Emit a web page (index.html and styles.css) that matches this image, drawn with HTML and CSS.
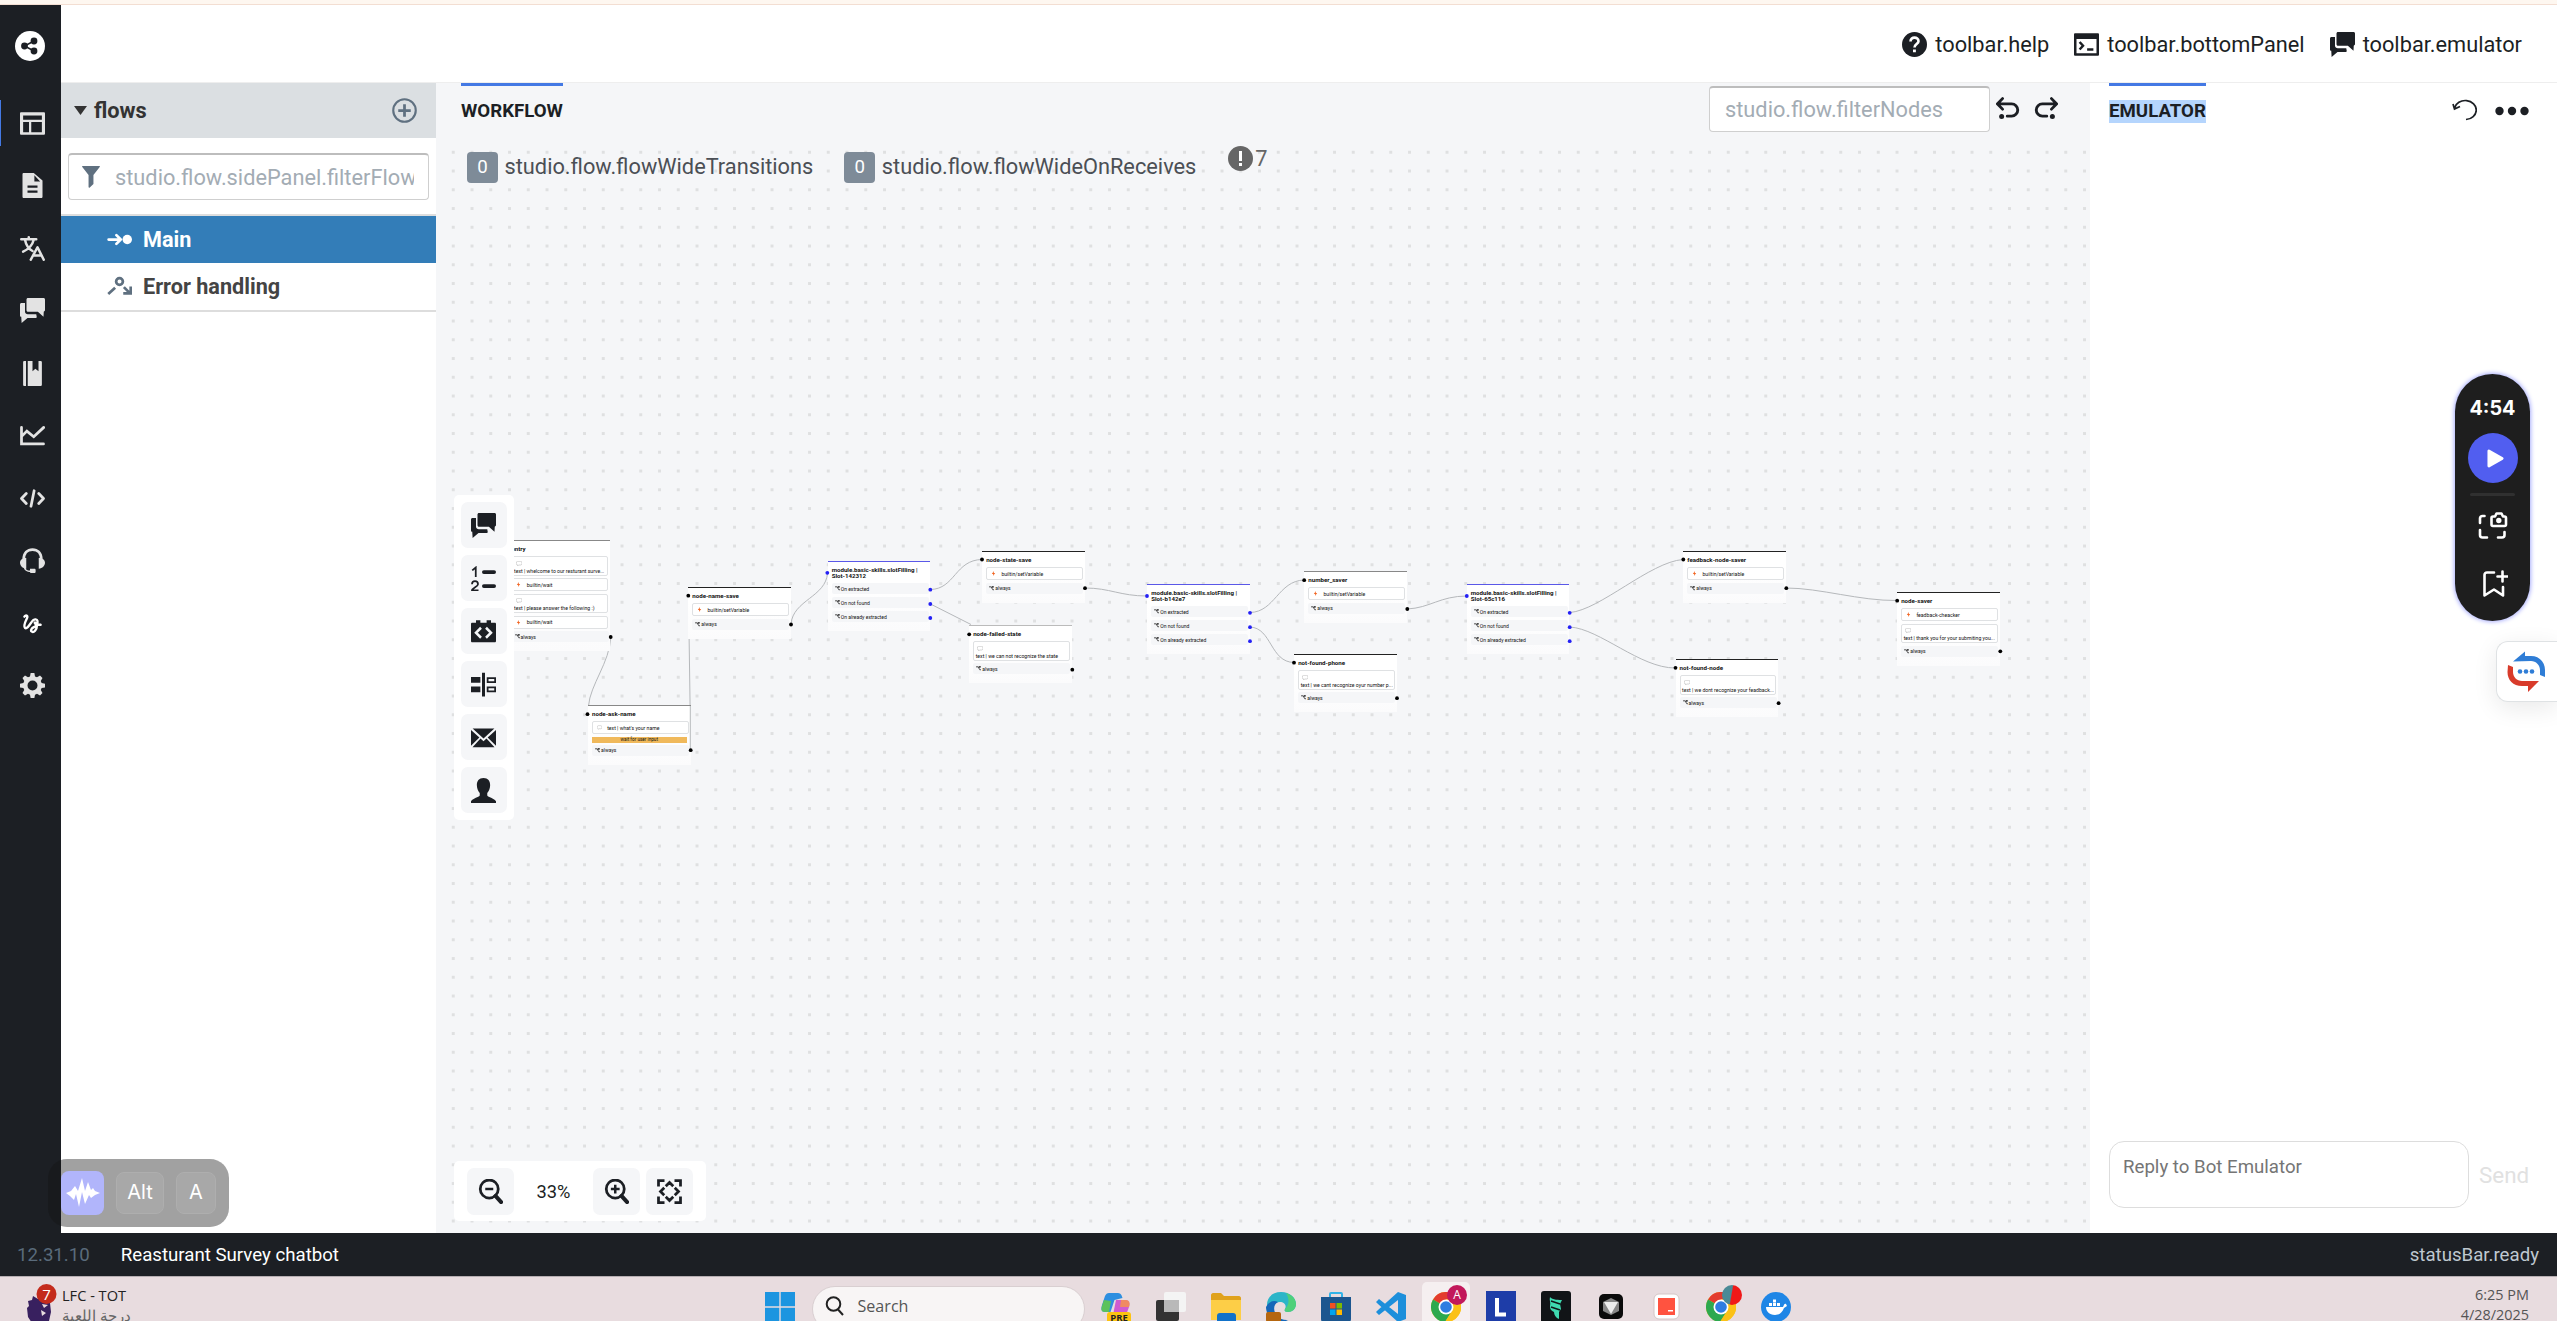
FILE: index.html
```html
<!DOCTYPE html>
<html lang="en">
<head>
<meta charset="utf-8">
<title>Studio</title>
<link rel="stylesheet" href="styles.css">
</head>
<body>
<svg class="defs" width="0" height="0">
  <symbol id="chat" viewBox="0 0 20 20"><path d="M4 4H1.200C.5 4 0 4.500 0 5.200V14c0 .7.3 1 1 1l.3 5L6 16h6.300c.6 0 1.100-.3 1.100-.9L13 13H6.200C5 13 4 12.200 4 11z"/><path d="M6.400 0H18.800C19.500 0 20 .5 20 1.200V10l-1 1-.2 4-4.500-4H6.400C5.700 11 5.200 10.500 5.200 9.800V1.200C5.200.5 5.700 0 6.400 0z"/></symbol>
  <symbol id="bolt" viewBox="0 0 8 12"><path d="M5 0L0 7h3.300L2.800 12 8 5H4.600z"/></symbol>
  <symbol id="branch" viewBox="0 0 12 12"><path d="M0 2h5l4 7h3M6 2h6M9 0v5" fill="none" stroke="currentColor" stroke-width="1.700"/></symbol>
  <symbol id="bubble" viewBox="0 0 12 10"><path d="M3 .6h6A2.800 3.300 0 0 1 9 8H5L3.500 9.500V8A2.800 3.700 0 0 1 3 .6z" fill="#fff" stroke="#aaa" stroke-width="1"/></symbol>
  <symbol id="chrome" viewBox="0 0 30 30"><circle cx="15" cy="15" r="15" fill="#fbc116"/><path d="M15 15L2 7.500A15 15 0 0 1 28 7.500H15z" fill="#e33b2e"/><path d="M2 7.500A15 15 0 0 0 14 30l7-11-6-4z" fill="#2da94f"/><path d="M15 7.500H28A15 15 0 0 1 14 30l7-11z" fill="#fbc116"/><circle cx="15" cy="15" r="7.500" fill="#fff"/><circle cx="15" cy="15" r="5.800" fill="#2f7de1"/></symbol>
</svg>
<div class="strip"></div>
<div class="app">
  <nav class="rail">
    <svg class="logo" viewBox="0 0 30 30"><circle cx="15" cy="15" r="15" fill="#fff"/><path d="M19 10L9.500 15l9.500 5" fill="none" stroke="#1c1f24" stroke-width="1.500"/><circle cx="19" cy="10" r="3.400" fill="#1c1f24"/><circle cx="9.500" cy="15" r="3.400" fill="#1c1f24"/><circle cx="19" cy="20" r="3.400" fill="#1c1f24"/></svg>
    <div class="rail-item active"><svg viewBox="0 0 20 20"><path fill-rule="evenodd" d="M1 1h18c.6 0 1 .4 1 1v16c0 .6-.4 1-1 1H1c-.6 0-1-.4-1-1V2c0-.6.400-1 1-1zm1.500 2.500V7h15V3.500zm0 5.200V17h4.700V8.700zm6.500 0V17h8.500V8.700z"/></svg></div>
    <div class="rail-item"><svg viewBox="0 0 20 20"><path fill-rule="evenodd" d="M3 0h8l7 6v13c0 .6-.4 1-1 1H3c-.6 0-1-.4-1-1V1c0-.6.400-1 1-1zm8.500 1.700v5h4.600zM6 10v1.800h8V10zm0 4v1.800h8V14z"/></svg></div>
    <div class="rail-item"><svg viewBox="0 0 20 20" fill="none" stroke="currentColor" stroke-width="2" stroke-linecap="round" stroke-linejoin="round"><path d="M1 2.600h12M7 1v1.600M4 3c1 5 4 8 6 9M11 3c-1 4-4 7.500-8.500 9.500M8.600 19L14 9l5 10M10.800 15.500h6.500"/></svg></div>
    <div class="rail-item"><svg><use href="#chat"/></svg></div>
    <div class="rail-item"><svg viewBox="0 0 20 20"><path d="M3.300 0H4.800V20H3.300A.8.800 0 0 1 2.500 19.200V.800A.8.800 0 0 1 3.300 0zM6.200 0H10V8.200L12.300 6.200 14.800 8.200V0h1.700A1 1 0 0 1 17.500 1V19a1 1 0 0 1-1 1H6.200z"/></svg></div>
    <div class="rail-item"><svg viewBox="0 0 20 20" fill="none" stroke="currentColor" stroke-width="2.200" stroke-linecap="round"><path d="M1.200 3.500v13.200h17.600M1.500 10.500L5.500 6.500l5.500 4.500 8-7.500"/></svg></div>
    <div class="rail-item"><svg viewBox="0 0 20 20" fill="none" stroke="currentColor" stroke-width="2.200" stroke-linecap="round" stroke-linejoin="round"><path d="M5 6L1.200 10 5 14M15 6l3.800 4L15 14M11.300 3.800L8.800 16.200"/></svg></div>
    <div class="rail-item"><svg viewBox="0 0 20 20"><path d="M3 9C3 4 6 1.200 10 1.200S17 4 17 9" fill="none" stroke="currentColor" stroke-width="2.200"/><path d="M5 8v8.500C2 16.500 0 14 0 11.800S2 7.500 5 8zM15 8v8.500c3 0 5-2.500 5-4.700S18 7.500 15 8zM8 16.500h3.500c.6 0 1 .4 1 1v1.500c0 .6-.4 1-1 1H9c-.6 0-1-.3-1-.8C6 19 4 18.500 3 16l1-.3c.8 1.700 2 2.200 4 2.300z"/></svg></div>
    <div class="rail-item bright"><svg viewBox="0 0 20 20" fill="none" stroke="currentColor" stroke-width="1.900" stroke-linecap="round" stroke-linejoin="round"><path d="M3.500 4.500C5 2.500 6.500 4 5.500 6S2.500 12 4 13.500s4-3 5.500-5 4-2.500 4.500-.5-1.500 4.500-3 5-3 2.500-1.500 3.500 4-1.500 4-4.500S11 8.500 12 10s3 .8 4.500 1"/></svg></div>
    <div class="rail-item"><svg viewBox="0 0 20 20"><path fill-rule="evenodd" d="M8.500 0h3l.5 2.700 1.600.7L16 2 18 4l-1.400 2.400.7 1.600 2.700.5v3l-2.700.5-.7 1.600L18 16l-2 2-2.400-1.400-1.600.7-.5 2.700h-3L8 17.300l-1.600-.7L4 18l-2-2 1.400-2.400L2.700 12 0 11.500v-3L2.700 8l.7-1.600L2 4l2-2 2.400 1.400L8 2.700zM10 6a4 4 0 1 0 0 8 4 4 0 0 0 0-8z"/></svg></div>
  </nav>
  <div class="main">
    <header class="topbar">
      <div class="tb"><svg viewBox="0 0 20 20"><circle cx="10" cy="10" r="10"/><path d="M6.800 7.500C6.800 3.500 13.200 3.500 13.200 7.300c0 2.200-3.200 2.400-3.200 5" fill="none" stroke="#fff" stroke-width="2.100"/><path d="M8.800 14h2.300v2.200H8.800z" fill="#fff"/></svg><span>toolbar.help</span></div>
      <div class="tb"><svg viewBox="0 0 20 20"><path fill-rule="evenodd" d="M1 1h18c.6 0 1 .4 1 1v16c0 .6-.4 1-1 1H1c-.6 0-1-.4-1-1V2c0-.6.400-1 1-1zm1 4.500V17h16V5.500z"/><path d="M4.500 8l2.700 3-2.700 3" fill="none" stroke="#1c1f24" stroke-width="2"/><path d="M10.500 13h5v2h-5z"/></svg><span>toolbar.bottomPanel</span></div>
      <div class="tb"><svg><use href="#chat"/></svg><span>toolbar.emulator</span></div>
    </header>
    <div class="panes">
      <aside class="side">
        <div class="side-head"><i class="caret"></i><b>flows</b><svg viewBox="0 0 20 20" fill="none" stroke="#5f7080" stroke-width="1.700"><circle cx="10" cy="10" r="9"/><path d="M10 5v10M5 10h10" stroke-width="2.200"/></svg></div>
        <div class="side-filter"><svg viewBox="0 0 22 27"><path d="M.8 0h20.400c.7 0 1 .8.500 1.300L14 11v11l-4.500 4.500c-.6.500-1.500.2-1.500-.7V11L.3 1.300C-.2.800.1 0 .8 0z" fill="#5f7080"/></svg><div class="ph">studio.flow.sidePanel.filterFlows</div></div>
        <div class="flow sel"><svg viewBox="0 0 20 20"><path d="M1.300 10h9M7.500 6.500L11 10l-3.500 3.500" fill="none" stroke="#fff" stroke-width="2.200" stroke-linecap="round" stroke-linejoin="round"/><circle cx="16.200" cy="10" r="3.800" fill="#fff"/></svg><b>Main</b></div>
        <div class="flow"><svg viewBox="0 0 20 20" fill="none" stroke="#5f7080" stroke-width="2.200"><path d="M1 16L6.500 11M13.500 10.500l5 5M19 10v5.500h-6"/><circle cx="10" cy="6" r="2.700"/></svg><b>Error handling</b></div>
      </aside>
      <section class="canvas">
        <div class="tabbar">
          <div class="tab"><b>WORKFLOW</b></div>
          <div class="tools">
            <div class="filter">studio.flow.filterNodes</div>
            <svg viewBox="0 0 20 20"><path d="M3 5.500h9.500a4.800 4.800 0 0 1 0 9.800H9M5.200 1.300L1.200 5.500l4 4.200" fill="none" stroke="#1c1f24" stroke-width="2.300" stroke-linecap="round"/><circle cx="4.500" cy="15.500" r="2"/></svg>
            <svg viewBox="0 0 20 20"><path d="M17 5.500H7.500a4.800 4.800 0 0 0 0 9.800H11M14.800 1.300l4 4.200-4 4.200" fill="none" stroke="#1c1f24" stroke-width="2.300" stroke-linecap="round"/><circle cx="15.500" cy="15.500" r="2"/></svg>
          </div>
        </div>
        <div class="wide"><span class="badge">0</span><span class="w1">studio.flow.flowWideTransitions</span><span class="badge">0</span><span class="w2">studio.flow.flowWideOnReceives</span><span class="warn"><svg viewBox="0 0 20 20"><circle cx="10" cy="10" r="10"/><path d="M8.800 4h2.400v8H8.800zM8.800 13.500h2.400v2.400H8.800z" fill="#fff"/></svg>7</span></div>

        <div class="diagram">
          <svg class="edges" width="2557" height="1321" fill="none" stroke="#b5b8bb" stroke-width="1">
            <path d="M610.700 637C610 662 590 685 588.500 706"/><path d="M690.500 750L690 700 688.500 596"/><path d="M791 624C793 600 826 597 827.500 573"/><path d="M930.500 589.500C955 589 955 560 982 559.500"/><path d="M930.500 604L971 624.500"/><path d="M1085 588C1110 588 1120 596 1147 596"/><path d="M1250 612.500C1275 612 1278 581 1304 580"/><path d="M1250 627C1272 628 1270 662 1294 662.500"/><path d="M1407 609C1430 608 1440 596 1467 596"/><path d="M1570 612.500C1600 610 1650 562 1683 559.500"/><path d="M1570 627C1600 629 1640 668 1675 668"/><path d="M1786 588C1820 588 1860 601 1897 600.500"/>
          </svg>
          <div class="node gray" style="left:507.500px;top:540px"><h4>entry</h4><div class="say"><svg><use href="#bubble"/></svg><p>text | whelcome to our resturant surve...</p></div><div class="act"><svg><use href="#bolt"/></svg>builtin/wait</div><div class="say"><svg><use href="#bubble"/></svg><p>text | please answer the following :)</p></div><div class="act"><svg><use href="#bolt"/></svg>builtin/wait</div><div class="go"><svg><use href="#branch"/></svg>always</div></div>
          <div class="node" style="left:688.300px;top:587px"><h4>node-name-save</h4><div class="act"><svg><use href="#bolt"/></svg>builtin/setVariable</div><div class="go"><svg><use href="#branch"/></svg>always</div></div>
          <div class="node gray" style="left:588px;top:705px"><h4>node-ask-name</h4><div class="act"><svg><use href="#bubble"/></svg>text | what's your name</div><div class="wait">wait for user input</div><div class="go"><svg><use href="#branch"/></svg>always</div></div>
          <div class="node blue" style="left:827.700px;top:561px"><h4 class="two">module.basic-skills.slotFilling |<br>Slot-142312</h4><div class="go"><svg><use href="#branch"/></svg>On extracted</div><div class="go"><svg><use href="#branch"/></svg>On not found</div><div class="go"><svg><use href="#branch"/></svg>On already extracted</div></div>
          <div class="node" style="left:982.200px;top:551px"><h4>node-state-save</h4><div class="act"><svg><use href="#bolt"/></svg>builtin/setVariable</div><div class="go"><svg><use href="#branch"/></svg>always</div></div>
          <div class="node light" style="left:969.200px;top:625px"><h4>node-failed-state</h4><div class="say"><svg><use href="#bubble"/></svg><p>text | we can not recognize the state</p></div><div class="go"><svg><use href="#branch"/></svg>always</div></div>
          <div class="node blue" style="left:1147.200px;top:584px"><h4 class="two">module.basic-skills.slotFilling |<br>Slot-b142e7</h4><div class="go"><svg><use href="#branch"/></svg>On extracted</div><div class="go"><svg><use href="#branch"/></svg>On not found</div><div class="go"><svg><use href="#branch"/></svg>On already extracted</div></div>
          <div class="node gray" style="left:1304.300px;top:571px"><h4>number_saver</h4><div class="act"><svg><use href="#bolt"/></svg>builtin/setVariable</div><div class="go"><svg><use href="#branch"/></svg>always</div></div>
          <div class="node" style="left:1294.200px;top:654px"><h4>not-found-phone</h4><div class="say"><svg><use href="#bubble"/></svg><p>text | we cant recognize oyur number p...</p></div><div class="go"><svg><use href="#branch"/></svg>always</div></div>
          <div class="node blue" style="left:1466.800px;top:584px"><h4 class="two">module.basic-skills.slotFilling |<br>Slot-65c116</h4><div class="go"><svg><use href="#branch"/></svg>On extracted</div><div class="go"><svg><use href="#branch"/></svg>On not found</div><div class="go"><svg><use href="#branch"/></svg>On already extracted</div></div>
          <div class="node" style="left:1683.300px;top:551px"><h4>feadback-node-saver</h4><div class="act"><svg><use href="#bolt"/></svg>builtin/setVariable</div><div class="go"><svg><use href="#branch"/></svg>always</div></div>
          <div class="node" style="left:1675.600px;top:659px"><h4>not-found-node</h4><div class="say"><svg><use href="#bubble"/></svg><p>text | we dont recognize your feadback...</p></div><div class="go"><svg><use href="#branch"/></svg>always</div></div>
          <div class="node" style="left:1897.200px;top:592px"><h4>node-saver</h4><div class="act"><svg><use href="#bolt"/></svg>feadback-cheacker</div><div class="say"><svg><use href="#bubble"/></svg><p>text | thank you for your submiting you...</p></div><div class="go"><svg><use href="#branch"/></svg>always</div></div>
          <svg class="edges" width="2557" height="1321"><path d="M690.300 750V706" stroke="#b5b8bb"/>
            <g fill="#000"><circle cx="610.700" cy="637" r="1.900"/><circle cx="688.300" cy="595.700" r="1.900"/><circle cx="791" cy="624.500" r="1.900"/><circle cx="587.500" cy="714.200" r="1.900"/><circle cx="690.700" cy="750.200" r="1.900"/><circle cx="982" cy="559.500" r="1.900"/><circle cx="1085" cy="588.200" r="1.900"/><circle cx="969.200" cy="634.300" r="1.900"/><circle cx="1072.300" cy="669.700" r="1.900"/><circle cx="1304.200" cy="580.200" r="1.900"/><circle cx="1407.300" cy="609" r="1.900"/><circle cx="1294" cy="662.700" r="1.900"/><circle cx="1397" cy="698.200" r="1.900"/><circle cx="1683.300" cy="559.500" r="1.900"/><circle cx="1786.300" cy="588.200" r="1.900"/><circle cx="1675.500" cy="667.800" r="1.900"/><circle cx="1778.600" cy="703.200" r="1.900"/><circle cx="1897.200" cy="600.700" r="1.900"/><circle cx="2000.300" cy="651.300" r="1.900"/></g>
            <g fill="#2420f5"><circle cx="827.300" cy="572.800" r="1.900"/><circle cx="930.300" cy="589.700" r="1.900"/><circle cx="930.300" cy="604" r="1.900"/><circle cx="930.300" cy="618" r="1.900"/><circle cx="1147" cy="596" r="1.900"/><circle cx="1250" cy="612.800" r="1.900"/><circle cx="1250" cy="627.200" r="1.900"/><circle cx="1250" cy="641.200" r="1.900"/><circle cx="1466.800" cy="596" r="1.900"/><circle cx="1569.700" cy="612.800" r="1.900"/><circle cx="1569.700" cy="627.200" r="1.900"/><circle cx="1569.700" cy="641.200" r="1.900"/></g>
          </svg>
        </div>

        <div class="palette">
          <div><svg><use href="#chat"/></svg></div>
          <div><svg viewBox="0 0 20 20"><path d="M10.300 4.800h8.200M10.300 16h8.200" stroke="#1c1f24" stroke-width="3" stroke-linecap="round"/><path d="M1 3.500l2.800-2.300V8.700M.8 14.500c0-3.200 4.800-3.200 4.800 0 0 2-4.600 2.800-4.800 5h5.200" fill="none" stroke="#1c1f24" stroke-width="1.400"/></svg></div>
          <div><svg viewBox="0 0 20 20"><path d="M4 1h3.500v2H12.500V1H16v2h3c.6 0 1 .400 1 1v13.500c0 .6-.4 1-1 1H1c-.6 0-1-.4-1-1V4c0-.6.400-1 1-1h3z"/><path d="M8 7l-4 4 4 4M12 7l4 4-4 4" fill="none" stroke="#f5f6f8" stroke-width="2"/></svg></div>
          <div><svg viewBox="0 0 20 20"><path d="M8.800.5h2.400v19H8.800zM0 4h7.500v4.600H0zM0 11.500h7.500v4.600H0z"/><path d="M13.300 4.800h6v3.200h-6zM13.300 12.200h6v3.200h-6z" fill="none" stroke="#1c1f24" stroke-width="1.400"/></svg></div>
          <div><svg viewBox="0 0 20 20"><path d="M0 4l6.700 6L0 16.500zM20 4l-6.700 6L20 16.500zM1.300 2.800h17.400L10 10.800zM7.600 10.800L10 13l2.400-2.200 6.400 7H1.200z"/></svg></div>
          <div><svg viewBox="0 0 20 20"><path d="M10 0c3.600 0 5.500 2.500 5.300 6-.1 2.500-1 4.500-2.300 6v2c1 1.500 5 2 7 4.500V20H0v-1.500C2 16 6 15.500 7 14v-2C5.700 10.500 4.800 8.500 4.700 6 4.500 2.500 6.400 0 10 0z"/></svg></div>
        </div>
        <div class="zoombar">
          <div class="zb"><svg viewBox="0 0 20 20"><circle cx="9" cy="8" r="7.200" fill="none" stroke="#1c1f24" stroke-width="2.200"/><path d="M5.800 8h6.400" stroke="#1c1f24" stroke-width="2"/><path d="M14 13.500l4.500 5" stroke="#1c1f24" stroke-width="3.200" stroke-linecap="round"/></svg></div>
          <span class="pct">33%</span>
          <div class="zb"><svg viewBox="0 0 20 20"><circle cx="9" cy="8" r="7.200" fill="none" stroke="#1c1f24" stroke-width="2.200"/><path d="M5.500 8h7M9 4.500v7" stroke="#1c1f24" stroke-width="2"/><path d="M14 13.500l4.500 5" stroke="#1c1f24" stroke-width="3.200" stroke-linecap="round"/></svg></div>
          <div class="zb"><svg viewBox="0 0 20 20" fill="none" stroke="#1c1f24" stroke-width="2.200"><path d="M1.200 6V1.200H6M14 1.200h4.800V6M18.800 14v4.800H14M6 18.800H1.200V14M7 5.800l3-3 3 3M7 14.200l3 3 3-3M5.800 7l-3 3 3 3M14.200 7l3 3-3 3"/></svg></div>
        </div>
      </section>
      <section class="emu">
        <div class="emu-head"><div class="tab"><b>EMULATOR</b></div><div class="emu-icons"><svg viewBox="0 0 25 22" fill="none" stroke="#1c1f24" stroke-width="1.700"><path d="M2.500 9A11 9.500 0 1 1 14 20.500M1 5l1.500 5L8 7.500"/></svg><svg class="more" viewBox="0 0 34 10"><circle cx="4.500" cy="5" r="4.200"/><circle cx="17" cy="5" r="4.200"/><circle cx="29.500" cy="5" r="4.200"/></svg></div></div>
        <div class="reply"><div class="box">Reply to Bot Emulator</div><span class="send">Send</span></div>
      </section>
    </div>
  </div>
</div>
<footer class="status"><span class="ver">12.31.10</span><span class="bot">Reasturant Survey chatbot</span><span class="ready">statusBar.ready</span></footer>
<div class="taskbar">
  <div class="score"><svg viewBox="0 0 36 42"><path d="M7 12l5 3 6-2 6 6 1 9-2 9-6 5H8l-6-9-1-9 2-2-1-5 4-1z" fill="#38205f"/><path d="M16 20l6 1-4 3zM15 26l5 3-4 3z" fill="#e8dcdf"/><circle cx="20.500" cy="10" r="10" fill="#c42b1c"/><text x="20.500" y="15.500" text-anchor="middle" font-size="15" fill="#fff">7</text></svg><div><p>LFC - TOT</p><p class="ar">درجة اللعبة</p></div></div>
  <div class="apps">
    <svg class="win" viewBox="0 0 30 30"><path d="M0 0h14.300v14.300H0zM15.700 0H30v14.300H15.700zM0 15.700h14.300V30H0zM15.700 15.700H30V30H15.700z" fill="#1c95e0"/></svg>
    <div class="search"><svg viewBox="0 0 20 20" fill="none" stroke="#222" stroke-width="2"><circle cx="8.500" cy="8" r="6.800"/><path d="M13 13.500l5 5.500"/></svg><span>Search</span></div>
    <svg viewBox="0 0 30 30"><path d="M8 1h9c3 0 4 3 4.500 5l-8 2-4 12H4c-4 0-4-3-3-7l3-9c1-2 2-3 4-3z" fill="#2d8fe0"/><path d="M3 8l7 1-2 11H4c-4 0-4-3-3-6z" fill="#5cc25c"/><path d="M15 8h9c4 0 5 3 4 7l-3 8H12z" fill="#cf5bd0"/><path d="M20 8h5c4 0 4 4 3 7h-9z" fill="#f08a62"/><rect x="6" y="20" width="24" height="14" rx="3" fill="#fdc30f"/><text x="18" y="28.500" text-anchor="middle" font-size="9.500" font-weight="700" fill="#222">PRE</text></svg>
    <svg viewBox="0 0 30 30"><rect x="0" y="8" width="23" height="21" rx="2" fill="#333"/><rect x="8" y="0" width="22" height="20" rx="2" fill="#f4f4f4"/><rect x="8" y="8" width="15" height="12" fill="#b9b9b9"/></svg>
    <svg viewBox="0 0 30 30"><path d="M0 3c0-1 1-2 2-2h8l3 3h15c1 0 2 1 2 2v22H0z" fill="#e0a21c"/><path d="M0 8h30v20H0z" fill="#fdce47"/><path d="M6 30v-6c0-2 1-3 3-3h13c2 0 3 1 3 3v6z" fill="#1272c9"/></svg>
    <svg viewBox="0 0 30 30"><path d="M15 0c9 0 15 6 15 12 0 5-4 8-8 8-3 0-4-1-3-3 2-4-1-7-5-7C7 10 4 16 6 24-3 16 0 0 15 0z" fill="#2cb5c8"/><path d="M20 1c7 2 10 7 10 11 0 5-4 8-8 8-3 0-4-1-3-3 5-5 4-11 1-16z" fill="#4fd07a"/><path d="M12 10C4 14 9 29 22 28 12 34 0 26 0 15 3 9 8 8 12 10z" fill="#1566b8"/><rect x="0" y="20" width="15" height="10" rx="2" fill="#b5660f"/></svg>
    <svg viewBox="0 0 30 30"><path d="M9 6V2c0-1 0-1 1-1h10c1 0 1 0 1 1v4" fill="none" stroke="#31b3e8" stroke-width="2"/><path d="M0 5h30v22c0 2-1 3-3 3H3c-2 0-3-1-3-3z" fill="#1c568f"/><path d="M9 11h5.500v5.500H9z" fill="#f25022"/><path d="M15.500 11H21v5.500h-5.500z" fill="#7fba00"/><path d="M9 17.500h5.500V23H9z" fill="#00a4ef"/><path d="M15.500 17.500H21V23h-5.500z" fill="#ffb900"/></svg>
    <svg viewBox="0 0 30 30"><path d="M22 0l8 3v24l-8 3L2 12l-2-2 3-3 19 15V8L3 23l-3-3 2-2z" fill="#1d8fdb"/></svg>
    <div class="cur"><svg viewBox="0 0 30 30"><use href="#chrome"/></svg><span>A</span></div>
    <svg viewBox="0 0 30 30"><path d="M0-1h30v32H0z" fill="#1e3da8"/><path d="M11 6v16.500h9" fill="none" stroke="#fff" stroke-width="4"/></svg>
    <svg viewBox="0 0 30 30"><rect y="-1" width="30" height="32" rx="3" fill="#111417"/><path d="M9 5c2 3 10 3 12 3l-2 4 1 5-2 3v7c-3-1-5-4-5-7-4-2-4-4-4-6 1-3-1-6 0-9z" fill="#3fd9b0"/><path d="M10 9l9 3M10 15l9 3" stroke="#111417" stroke-width="1.500"/></svg>
    <svg viewBox="0 0 30 30"><rect x="3" y="2" width="24" height="25" rx="5" fill="#0b0b0b"/><path d="M15 6l8 4v9l-8 4-8-4v-9z" fill="#888"/><path d="M8 10h14l-7 12z" fill="#eee"/></svg>
    <svg viewBox="0 0 30 30"><rect x="3" y="2" width="25" height="25" rx="5" fill="#fff" stroke="#d4c6c6"/><path d="M7 6h17v17H7z" fill="#ff5340"/><path d="M17 18h5v1.500h-5z" fill="#fff"/></svg>
    <div class="plain"><svg viewBox="0 0 30 30"><use href="#chrome"/></svg><i></i></div>
    <svg viewBox="0 0 30 30"><circle cx="15" cy="15" r="15" fill="#1f86e6"/><path d="M5 15h17c1-3 2-4 3-3l1 2-3 2c-2 5-5 7-9 7-6 0-9-4-9-8zM8 11h3v3H8zM12 11h3v3h-3zM16 11h3v3h-3zM12 7.500h3v3h-3z" fill="#fff"/></svg>
  </div>
  <div class="clock"><p>6:25 PM</p><p>4/28/2025</p></div>
</div>
<div class="keys"><div class="wave"><svg viewBox="0 0 34 30"><path d="M0 15l5-2 4-5 3 5 4-13 3 13 3-9 3 8 2-2 2 3 5 2-5 2-4 3-2-3-4 9-3-12-3 15-3-13-2 6-4-4z" fill="#fff"/></svg></div><div class="key alt">Alt</div><div class="key">A</div></div>
<div class="rec"><b>4:54</b><div class="play"><svg viewBox="0 0 18 20"><path d="M2 2v16l14-8z" fill="#fff" stroke="#fff" stroke-width="3" stroke-linejoin="round"/></svg></div><i></i>
  <svg class="shot" viewBox="0 0 30 28" fill="none" stroke="#fff" stroke-width="2.600" stroke-linecap="round" stroke-linejoin="round"><path d="M2 11V6.500C2 5 3 4 4.500 4H6.500M2 18v5c0 1.500 1 2.500 2.500 2.500H9M20 25.500h4c1.500 0 2.500-1 2.500-2.500v-3M13.500 6c0-1 .5-1.500 1.500-1.500h2l1.500-3h5L25 4.500h1.500c1 0 1.500.5 1.500 1.500v6.500c0 1-.5 1.500-1.500 1.500H15c-1 0-1.500-.5-1.500-1.500z"/><circle cx="20.800" cy="8.500" r="1.400" fill="#fff"/></svg>
  <svg class="mark" viewBox="0 0 26 28" fill="none" stroke="#fff" stroke-width="2.600" stroke-linecap="round" stroke-linejoin="round"><path d="M12 2.500H5C3.500 2.500 2.500 3.500 2.500 5v20.500l9.500-6 9 6V17M20.500 1.500v10M15.500 6.500h10"/></svg></div>
<div class="sidetab"><svg viewBox="0 0 38 42"><path d="M6 10.500L18 .5V5h6c8 0 14 6 14 14v7l-5-2v-5c0-5-4-9-9-9z" fill="#2f7dd6"/><path d="M1 14l5 2v5c0 5 4 9 9 9h17L21 41v-6h-6C6 35 .5 29 .5 21z" fill="#d83b2b"/><g fill="#2f7dd6"><circle cx="13" cy="20.500" r="2.300"/><circle cx="19" cy="20.500" r="2.300"/><circle cx="25" cy="20.500" r="2.300"/></g></svg></div>
</body>
</html>
```
FILE: styles.css
```css
* { box-sizing: border-box; }
body { margin: 0; width: 2557px; height: 1321px; overflow: hidden; position: relative; display: flex; flex-direction: column; font-family: Roboto, sans-serif; font-size: 20px; color: #1c1f24; background: #fff; }
p, h4 { margin: 0; }
svg { display: block; fill: currentColor; flex: none; }
svg[fill="none"] { fill: none; }
.defs { position: absolute; }
.strip { height: 5px; background: #fef7f0; border-bottom: 1px solid #f3ded2; }
.app { height: 1228px; display: flex; }
.rail { width: 61px; background: #1c1f24; color: #e3e3e3; }
.logo { width: 30px; height: 30px; margin: 0 0 39px 15px; }
.rail { padding-top: 26px; }
.rail-item { height: 46px; margin-bottom: 16.500px; padding-left: 20px; display: flex; align-items: center; }
.rail-item svg { width: 25px; height: 25px; }
.rail-item.active { border-left: 1px solid #4479e4; padding-left: 19px; }
.bright { color: #fff; }
.main { flex: 1; display: flex; flex-direction: column; }
.topbar { height: 78px; border-bottom: 1px solid #eee; display: flex; justify-content: flex-end; align-items: center; gap: 25px; padding: 1px 35px 0 0; font-size: 21.780px; }
.tb { display: flex; align-items: center; gap: 8px; }
.tb svg { width: 25px; height: 25px; }
.panes { flex: 1; display: flex; }
.side { width: 375px; background: #fff; }
.side-head { height: 55px; background: #dbdfe2; display: flex; align-items: center; padding: 0 19px 0 13px; color: #333; font-size: 21.780px; }
.side-head b { flex: 1; }
.side-head svg { width: 25px; height: 25px; }
.caret { width: 13px; height: 9px; margin-right: 7px; background: #333; clip-path: polygon(0 0, 100% 0, 50% 100%); }
.side-filter { margin: 15px 7px 14px; height: 47px; border: 1px solid #cfcfcf; border-top: 2px solid #bdbdbd; border-radius: 4px; display: flex; align-items: center; gap: 13px; padding: 0 14px 0 11px; color: #a3acb4; font-size: 21.780px; }
.side-filter svg { width: 22px; height: 22px; }
.ph { flex: 1; overflow: hidden; white-space: nowrap; }
.flow { height: 47px; display: flex; align-items: center; gap: 11px; padding-left: 46px; color: #444; font-size: 21.650px; background: #fff; }
.flow svg { width: 25px; height: 25px; }
.flow.sel { height: 49px; background: #337db8; color: #fff; border-top: 2px solid #dedede; }
.flow:last-child { height: 49px; border-bottom: 2px solid #ddd; }
.canvas { width: 1654px; position: relative; overflow: hidden; background-color: #f5f6f8; background-image: radial-gradient(circle at center, #dfe0e1 1.500px, transparent 1.900px); background-size: 18.750px 18.750px; background-position: 7.900px 59.900px; }
.tabbar { height: 56px; background: #f5f6f8; display: flex; justify-content: space-between; padding: 0 32px 0 25px; }
.tab { border-top: 3px solid #4479e4; height: 56px; padding-top: 15px; font-size: 18.670px; line-height: 21px; }
.tools { display: flex; height: 52px; align-items: center; }
.filter { width: 281px; height: 46px; margin-right: 6px; padding-left: 15px; line-height: 43px; border: 1px solid #cfcfcf; border-top: 2px solid #bdbdbd; border-radius: 4px; background: #fff; color: #a3acb4; font-size: 21.780px; }
.tools svg { width: 25px; height: 25px; margin-right: 12px; }
.tools svg:last-child { margin-right: 0; }
.wide { display: flex; align-items: center; height: 31px; margin: 13px 0 0 31px; color: #4b4f55; font-size: 21.780px; line-height: 25px; position: relative; z-index: 1; }
.wide > .w1, .wide > .w2 { margin-top: -2px; }
.badge { width: 31px; height: 31px; border-radius: 4px; background: #7e8b98; color: #fff; font-size: 18.670px; line-height: 31px; text-align: center; margin-right: 6.500px; }
.w1 { margin-right: 31px; }
.w2 { margin-right: 32px; }
.warn { display: flex; align-items: center; gap: 2px; color: #666; margin-top: -18px; }
.warn svg { width: 25px; height: 25px; }
.diagram { position: absolute; left: -436px; top: -83px; width: 2557px; height: 1321px; }
.edges { position: absolute; left: 0; top: 0; }
.edges[fill="none"] { fill: none; }
.node { position: absolute; width: 102.500px; padding: 0 2px 6px 4px; border-top: 1.200px solid #222; background: linear-gradient(#fff 30%, #fbfbfc); font-size: 5.150px; line-height: 6px; color: #111; }
.node.gray { border-top-color: #888; }
.node.light { border-top: 1.800px solid #bbb; }
.node.blue { border-top-color: #5a58e8; }
.node h4 { font-size: 6.130px; line-height: 6.500px; height: 15.300px; padding-top: 4.500px; white-space: nowrap; }
.node h4.two { height: 21px; }
.act { height: 13.200px; border: 1px solid #dfe1e3; border-radius: 2px; background: #fff; display: flex; align-items: center; padding-left: 3.700px; margin-bottom: 2.400px; white-space: nowrap; }
.act svg { width: 5px; height: 5px; margin-right: 5.500px; color: #f26522; }
.say { height: 19.500px; border: 1px solid #dfe1e3; border-radius: 2px; background: #fff; padding: 2.500px 0 0 1.500px; margin-bottom: 2.500px; white-space: nowrap; overflow: hidden; }
.say svg { width: 6px; height: 5px; margin: 1px 0 2px 1.500px; }
.wait { height: 5.700px; width: 94.500px; margin: 3px 0 1.500px; background: #f0b95b; text-align: center; font-size: 4.670px; }
.go { height: 11px; width: 97px; margin-bottom: 3px; border-radius: 2px; background: #f5f6f8; display: flex; align-items: center; padding-left: 3px; font-size: 5.050px; }
.go svg { width: 5px; height: 5px; margin-right: 1px; }
.palette { position: absolute; left: 18px; top: 412px; width: 60px; height: 325px; background: #fff; border-radius: 5px; padding: 7px; display: flex; flex-direction: column; gap: 7px; }
.palette div { height: 46px; border-radius: 7px; background: #f5f6f8; display: grid; place-items: center; }
.palette svg, .zb svg { width: 25px; height: 25px; }
.palette svg { margin-right: 1px; }
.zoombar { position: absolute; left: 18px; top: 1078px; width: 252px; height: 60px; background: #fff; border-radius: 5px; display: flex; align-items: center; padding: 0 13px; gap: 6px; }
.zb { width: 47px; height: 47px; border-radius: 7px; background: #f5f6f8; display: grid; place-items: center; padding-right: 1px; }
.pct { flex: 1; text-align: center; font-size: 18.300px; }
.emu { width: 467px; background: #fff; display: flex; flex-direction: column; justify-content: space-between; }
.emu-head { display: flex; justify-content: space-between; padding: 0 28px 0 19px; }
.emu b { background: #b5d5fd; display: block; line-height: 23px; margin-top: -1px; }
.emu-icons { display: flex; align-items: center; gap: 18px; }
.emu-icons svg { width: 25px; height: 22px; margin-top: -3px; }
.emu-icons .more { width: 34px; height: 10px; margin-top: 0; }
.reply { display: flex; align-items: center; gap: 10px; padding: 0 0 25px 19px; }
.box { width: 360px; height: 67px; border: 1px solid #ddd; border-radius: 15px; padding: 14px 13px; color: #757575; font-size: 18.670px; line-height: 22px; }
.send { color: #e1e1e1; font-size: 22.400px; }
.status { height: 43px; background: #1c1f24; display: flex; align-items: center; padding: 0 18px 0 17px; font-size: 18.670px; color: #fff; }
.ver { color: #5a6b7b; margin-right: 31px; }
.ready { margin-left: auto; color: #bfc8d0; }
.taskbar { height: 45px; overflow: hidden; background: #e8dcdf; border-top: 1px solid #b6aeb2; position: relative; display: flex; justify-content: space-between; font-family: "Open Sans", sans-serif; font-size: 14.600px; color: #222; }
.score { display: flex; padding: 7px 0 0 26px; }
.score svg { width: 36px; height: 42px; }
.score p { line-height: 20px; white-space: nowrap; padding-top: 1px; }
.score .ar { color: #666; padding: 0; font-size: 14.800px; }
.apps { position: absolute; left: 764.500px; top: 15px; display: flex; gap: 25px; }
.apps > svg, .apps div > svg { width: 30px; height: 30px; overflow: visible; }
.apps .win { margin-right: -8px; }
.search { width: 273px; height: 46px; margin: -6px -8.500px 0 0; border-radius: 23px; background: #f8f5f5; border: 1px solid #d9cfd1; display: flex; align-items: center; gap: 13px; padding: 0 12px 6px; color: #555; font-size: 16.100px; }
.apps .search svg { width: 20px; height: 20px; }
.cur, .plain { position: relative; width: 30px; }
.cur::before { content: ""; position: absolute; left: -9px; top: -10px; width: 48px; height: 60px; background: #f5eff0; border-radius: 5px; }
.cur svg { position: relative; }
.cur span { position: absolute; left: 16px; top: -7px; width: 20px; height: 20px; border-radius: 50%; background: #c2185b; color: #fff; font-size: 12px; line-height: 20px; text-align: center; }
.plain i { position: absolute; left: 16px; top: -7px; width: 20px; height: 20px; border-radius: 50%; background: linear-gradient(100deg, #4b8a96 45%, #f01818 50%); }
.clock { margin-left: auto; padding: 7.500px 28px 0 0; text-align: right; color: #555; font-size: 14.450px; }
.clock p { line-height: 20px; }
.keys { position: absolute; left: 48px; top: 1159px; width: 181px; height: 68px; border-radius: 19px; background: rgba(20, 20, 20, .4); display: flex; align-items: center; gap: 12px; padding-left: 13px; color: #fff; }
.wave { width: 43px; height: 44px; border-radius: 8px; background: #b1b5fb; display: grid; place-items: center; }
.wave svg { width: 34px; height: 30px; }
.key { width: 40px; height: 42px; border-radius: 8px; border: 1px solid #aeaeae; background: #a8a8a8; line-height: 38px; text-align: center; font-family: Inter, sans-serif; }
.key.alt { width: 48px; }
.rec { position: absolute; left: 2455px; top: 374px; width: 75px; height: 247px; border-radius: 38px; background: #1e1e1e; box-shadow: 0 0 4px 1px #a9aefc; display: flex; flex-direction: column; align-items: center; color: #fff; font-family: Inter, sans-serif; font-size: 19.800px; padding-top: 22px; }
.rec b { line-height: 24px; }
.play { width: 50px; height: 50px; margin-top: 13px; border-radius: 50%; background: #515ef0; display: grid; place-items: center; padding-left: 6px; }
.play svg { width: 17px; height: 19px; }
.rec i { width: 45px; height: 3px; margin: 10px 0 16px; background: #303030; border-radius: 2px; }
.shot { width: 30px; height: 28px; }
.mark { width: 26px; height: 28px; margin: 30px 0 0 4px; }
.sidetab { position: absolute; left: 2496px; top: 641px; width: 61px; height: 61px; border: 1px solid #dfe2e4; border-right: 0; border-radius: 12px 0 0 12px; background: #fff; box-shadow: 0 6px 24px rgba(0, 0, 0, .09); padding: 9px 10px; }
.sidetab svg { width: 38px; height: 42px; }
```
